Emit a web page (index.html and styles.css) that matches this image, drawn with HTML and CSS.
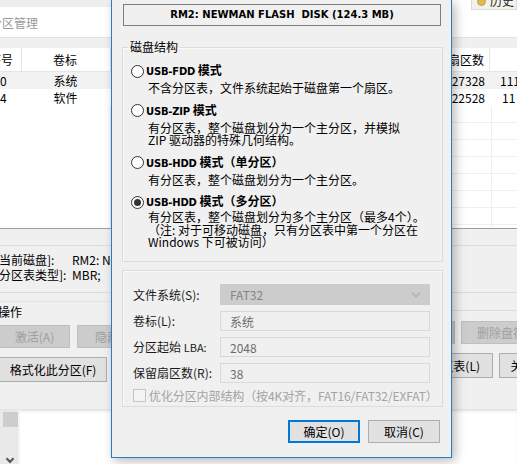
FILE: index.html
```html
<!DOCTYPE html>
<html lang="zh-CN">
<head>
<meta charset="utf-8">
<title>USB</title>
<link rel="stylesheet" href="styles.css">
</head>
<body>
<div class="screen">
  <div class="bg">
    <div class="bg-left">
      <div class="strip"></div>
      <div class="search"><span class="search-text">分区管理</span></div>
      <div class="band"></div>
      <div class="thead">
        <div class="c1 cut">序号</div>
        <div class="c2">卷标</div>
      </div>
      <div class="trow sel"><div class="c1">0</div><div class="c2">系统</div></div>
      <div class="trow"><div class="c1">4</div><div class="c2">软件</div></div>
      <div class="tfill lfill"></div>
      <div class="rule"></div>
      <div class="panel">
        <div class="info">
          <div class="irow"><span class="ilabel">[当前磁盘]:</span><span>RM2: NEWMAN</span></div>
          <div class="irow"><span class="ilabel">[分区表类型]:</span><span>MBR;</span></div>
        </div>
        <div class="ops">
          <div class="ops-title">[操作</div>
          <div class="brow">
            <div class="btn dis w70">激活(A)</div>
            <div class="btn dis w60">隐藏</div>
          </div>
          <div class="brow">
            <div class="btn w107">格式化此分区(F)</div>
          </div>
        </div>
      </div>
      <div class="bottom">
        <div class="vscroll"><div class="thumb"></div><div class="chev"></div></div>
      </div>
    </div>

    <div class="bg-right">
      <div class="strip rstrip"><div class="tab"><span class="tab-ico"></span><span>历史记录</span></div></div>
      <div class="search"></div>
      <div class="band"></div>
      <div class="thead">
        <div class="r1">扇区数</div>
        <div class="r2"></div>
      </div>
      <div class="trow sel"><div class="r1">227328</div><div class="r2">111</div></div>
      <div class="trow"><div class="r1">22528</div><div class="r2 r2b">11</div></div>
      <div class="tfill rfill"></div>
      <div class="rule"></div>
      <div class="panel">
        <div class="info"></div>
        <div class="ops">
          <div class="ops-title"></div>
          <div class="brow rb">
            <div class="btn dis w60 pull">隐藏</div>
            <div class="btn dis w80">删除盘符</div>
          </div>
          <div class="brow rb">
            <div class="btn w100 pull2">重建分区表(L)</div>
            <div class="btn w62">关闭(X)</div>
          </div>
        </div>
      </div>
      <div class="bottom"></div>
    </div>
  </div>

  <div class="dialog">
    <div class="devbox">RM2: NEWMAN FLASH&nbsp; DISK (124.3 MB)</div>

    <fieldset class="group g1">
      <legend>磁盘结构</legend>
      <div class="opts">
        <div class="opt">
          <div class="opt-head"><span class="radio"></span><span class="opt-title"><span class="lat">USB-FDD</span> 模式</span></div>
          <div class="opt-desc">不含分区表，文件系统起始于磁盘第一个扇区。</div>
        </div>
        <div class="opt">
          <div class="opt-head"><span class="radio"></span><span class="opt-title"><span class="lat">USB-ZIP</span> 模式</span></div>
          <div class="opt-desc">有分区表，整个磁盘划分为一个主分区，并模拟<br>ZIP 驱动器的特殊几何结构。</div>
        </div>
        <div class="opt">
          <div class="opt-head"><span class="radio"></span><span class="opt-title"><span class="lat">USB-HDD</span> 模式（单分区）</span></div>
          <div class="opt-desc">有分区表，整个磁盘划分为一个主分区。</div>
        </div>
        <div class="opt">
          <div class="opt-head"><span class="radio on"></span><span class="opt-title"><span class="lat">USB-HDD</span> 模式（多分区）</span></div>
          <div class="opt-desc last">有分区表，整个磁盘划分为多个主分区（最多4个）。<br>（注: 对于可移动磁盘，只有分区表中第一个分区在<br>Windows 下可被访问）</div>
        </div>
      </div>
    </fieldset>

    <div class="group g2">
      <div class="frow"><span class="flabel">文件系统(S):</span><div class="field select">FAT32<span class="chevron"></span></div></div>
      <div class="frow"><span class="flabel">卷标(L):</span><div class="field">系统</div></div>
      <div class="frow"><span class="flabel">分区起始 <span class="small">LBA:</span></span><div class="field">2048</div></div>
      <div class="frow"><span class="flabel">保留扇区数(R):</span><div class="field">38</div></div>
      <div class="crow"><span class="checkbox"></span><span class="clabel">优化分区内部结构（按4K对齐，FAT16/FAT32/EXFAT）</span></div>
    </div>

    <div class="actions">
      <div class="dbtn default">确定(O)</div>
      <div class="dbtn">取消(C)</div>
    </div>
  </div>
</div>
</body>
</html>
```

FILE: styles.css
```css
* { box-sizing: border-box; }

body {
  margin: 0;
  font-family: "Noto Sans CJK SC", "Liberation Sans", sans-serif;
  font-size: 12px;
  color: #000;
  background: #fff;
}

.screen {
  position: relative;
  width: 517px;
  height: 464px;
  overflow: hidden;
}

/* ---------- background window ---------- */
.bg {
  display: flex;
  justify-content: space-between;
  height: 464px;
}

.bg-left, .bg-right {
  display: flex;
  flex-direction: column;
  flex: none;
  white-space: nowrap;
}

.bg-left { width: 111px; }
.bg-right { width: 65px; }

.strip { height: 7px; background: #eeeeee; flex: none; }
.rstrip { background: #fff; position: relative; }
.tab {
  display: flex;
  align-items: center;
  gap: 4px;
  margin-left: 19px;
  margin-top: -8px;
  height: 18px;
  padding-left: 5px;
  background: #f3f1ec;
  border: 1px solid #dedbd3;
  color: #222;
  line-height: 14px;
  overflow: hidden;
}
.tab-ico {
  width: 9px; height: 9px; border-radius: 50%;
  background: #e6b84a;
  border: 1px solid #9bb26a;
  flex: none;
}

.search {
  height: 31px;
  flex: none;
  background: #fff;
  border-bottom: 1px solid #e3e3e3;
  display: flex;
  align-items: center;
}
.search-text {
  color: #9a9a9a;
  font-size: 12px;
  margin-left: -10px;
}

.band { height: 10px; flex: none; background: #f0f0f0; }

.thead {
  height: 24px;
  flex: none;
  display: flex;
  align-items: center;
  background: #fff;
  border-bottom: 1px solid #e5e5e5;
}
.trow {
  height: 17px;
  flex: none;
  display: flex;
  align-items: center;
  background: #fff;
}
.trow.sel { background: #f2f2f2; }

.c1 { width: 22px; flex: none; height: 100%; display: flex; align-items: center; }
.c2 { width: 89px; flex: none; height: 100%; display: flex; align-items: center; justify-content: center; padding-right: 2px; }
.thead .c1 { border-right: 1px solid #e5e5e5; }
.thead .c2 { border-right: 1px solid #e5e5e5; }
.cut { text-indent: -11px; }

.r1 { width: 38px; flex: none; height: 100%; display: flex; align-items: center; justify-content: flex-end; padding-right: 5px; }
.r2 { flex: 1; height: 100%; display: flex; align-items: center; padding-left: 10px; overflow: hidden; }
.r2b { padding-left: 12px; }
.thead .r1 { border-right: 1px solid #e5e5e5; }

.tfill { height: 122px; flex: none; background: #fff; }
.lfill { border-right: 1px solid #ededed; }
.rfill {
  background:
    linear-gradient(to right, transparent 39px, #efefef 39px, #efefef 40px, transparent 40px),
    repeating-linear-gradient(to bottom, #fff 0, #fff 16px, #efefef 16px, #efefef 17px);
}

.rule { height: 1px; flex: none; background: #9d9d9d; }

.panel {
  height: 181px;
  flex: none;
  background: #f0f0f0;
  padding-top: 16px;
  border-bottom: 1px solid #e2e2e2;
}

.info {
  height: 48px;
  border-top: 1px solid #dcdcdc;
  border-bottom: 1px solid #dcdcdc;
  padding-top: 6px;
}
.irow { display: flex; line-height: 15px; height: 15px; }
.ilabel { width: 77px; flex: none; margin-left: -5px; }

.ops { padding-top: 8px; }
.ops-title {
  height: 20px;
  line-height: 20px;
  margin-left: -6px;
  border-top: 1px solid #e4e4e4;
}
.bg-right .ops-title { border-top: none; border-bottom: 1px solid #dcdcdc; height: 10px; margin: 0 0 10px 0; }
.bg-left .ops-title { margin-bottom: 4px; }

.brow {
  display: flex;
  gap: 7px;
  height: 23px;
  margin-bottom: 9px;
}
.brow .btn:first-child { margin-left: -1px; }
.brow.rb { gap: 6px; }

.btn {
  flex: none;
  height: 23px;
  display: flex;
  align-items: center;
  justify-content: center;
  background: #e1e1e1;
  border: 1px solid #adadad;
  color: #000;
  overflow: hidden;
}
.brow:last-child .btn { height: 25px; }
.btn.dis { background: #cccccc; border-color: #bfbfbf; color: #9f9f9f; }
.w70 { width: 71px; }
.w60 { width: 60px; }
.w62 { width: 62px; }
.w80 { width: 80px; }
.w100 { width: 100px; }
.w107 { width: 108px; }
.brow.rb .pull { margin-left: -57px; }
.brow.rb .pull2 { margin-left: -59px; justify-content: flex-end; padding-right: 12px; }

.bottom { flex: 1; background: #fff; box-shadow: inset 0 2px 3px -1px rgba(0,0,0,.12); }
.vscroll {
  width: 20px;
  height: 100%;
  background: #e9e9e9;
  border-right: 2px solid #f4f4f4;
  padding: 2px 0 0 3px;
  position: relative;
}
.thumb { width: 15px; height: 15px; background: #cdcdcd; }
.chev {
  position: absolute;
  left: 7px;
  bottom: 2px;
  width: 6px; height: 6px;
  border-right: 2px solid #555;
  border-bottom: 2px solid #555;
  transform: rotate(45deg);
}

/* ---------- dialog ---------- */
.dialog {
  position: absolute;
  left: 111px;
  top: 0;
  width: 341px;
  height: 458px;
  background: #f0f0f0;
  border: 1px solid #2b7cc4;
  border-top: none;
  box-shadow: 3px 3px 10px rgba(0,0,0,.28);
  padding: 4px 10px 0 10px;
}

.devbox {
  margin-left: 1px;
  width: 318px;
  height: 22px;
  border: 1px solid #7d7d7d;
  background: #f0f0f0;
  font-family: "DejaVu Sans", sans-serif;
  font-weight: bold;
  font-size: 10px;
  line-height: 20px;
  text-align: center;
  white-space: nowrap;
}

.group {
  width: 321px;
  margin: 0;
  border: 1px solid #dcdcdc;
  box-shadow: inset 1px 1px 0 #fafafa;
}

fieldset.g1 {
  margin-top: 14px;
  padding: 0 0 0 8px;
  height: 222px;
  min-inline-size: 0;
}
fieldset.g1 legend {
  margin-left: -3px;
  padding: 0 2px;
  line-height: 14px;
  font-size: 12px;
}

.opts { padding-top: 9px; }
.opt { margin-bottom: 8px; }
.opt-head {
  display: flex;
  align-items: center;
  height: 16px;
}
.radio {
  width: 13px;
  height: 13px;
  border: 1px solid #333;
  border-radius: 50%;
  background: #fff;
  margin-right: 2px;
  flex: none;
  display: flex;
  align-items: center;
  justify-content: center;
}
.radio.on::after {
  content: "";
  width: 7px;
  height: 7px;
  border-radius: 50%;
  background: #333;
}
.opt-title {
  font-weight: bold;
  line-height: 16px;
  white-space: nowrap;
}
.lat {
  font-family: "DejaVu Sans", sans-serif;
  font-size: 10px;
  letter-spacing: -0.2px;
}
.opt-desc {
  margin: 3px 0 0 17px;
  line-height: 12.5px;
  white-space: nowrap;
}
.opt-desc.last { margin-top: 1px; }

.g2 {
  margin-top: 8px;
  padding: 13px 11px 4px 10px;
}
.frow {
  display: flex;
  align-items: center;
  height: 21px;
  margin-bottom: 5px;
}
.flabel { width: 87px; flex: none; white-space: nowrap; color: #1a1a1a; }
.small { font-size: 11px; }
.field {
  width: 210px;
  height: 21px;
  border: 1px solid #d9d9d9;
  background: #f0f0f0;
  color: #6d6d6d;
  padding-left: 9px;
  line-height: 19px;
  position: relative;
}
.frow:nth-child(2) .field, .frow:nth-child(3) .field, .frow:nth-child(4) .field { height: 20px; }
.field.select {
  background: #cccccc;
  border-color: #cccccc;
  color: #848484;
}
.chevron {
  position: absolute;
  right: 10px;
  top: 5px;
  width: 6px;
  height: 6px;
  border-right: 1px solid #a8a8a8;
  border-bottom: 1px solid #a8a8a8;
  transform: rotate(45deg);
}

.crow {
  display: flex;
  align-items: center;
  height: 14px;
  margin-top: 3px;
}
.checkbox {
  width: 13px;
  height: 13px;
  border: 1px solid #c4c4c4;
  background: #f3f3f3;
  margin-right: 3px;
  flex: none;
}
.clabel { color: #a3a3a3; white-space: nowrap; letter-spacing: -0.1px; }

.actions {
  display: flex;
  justify-content: flex-end;
  gap: 8px;
  margin-top: 13px;
  padding-right: 1px;
}
.dbtn {
  width: 72px;
  height: 23px;
  background: #e1e1e1;
  border: 1px solid #adadad;
  display: flex;
  align-items: center;
  justify-content: center;
}
.dbtn.default { border: 2px solid #0078d7; }
```
